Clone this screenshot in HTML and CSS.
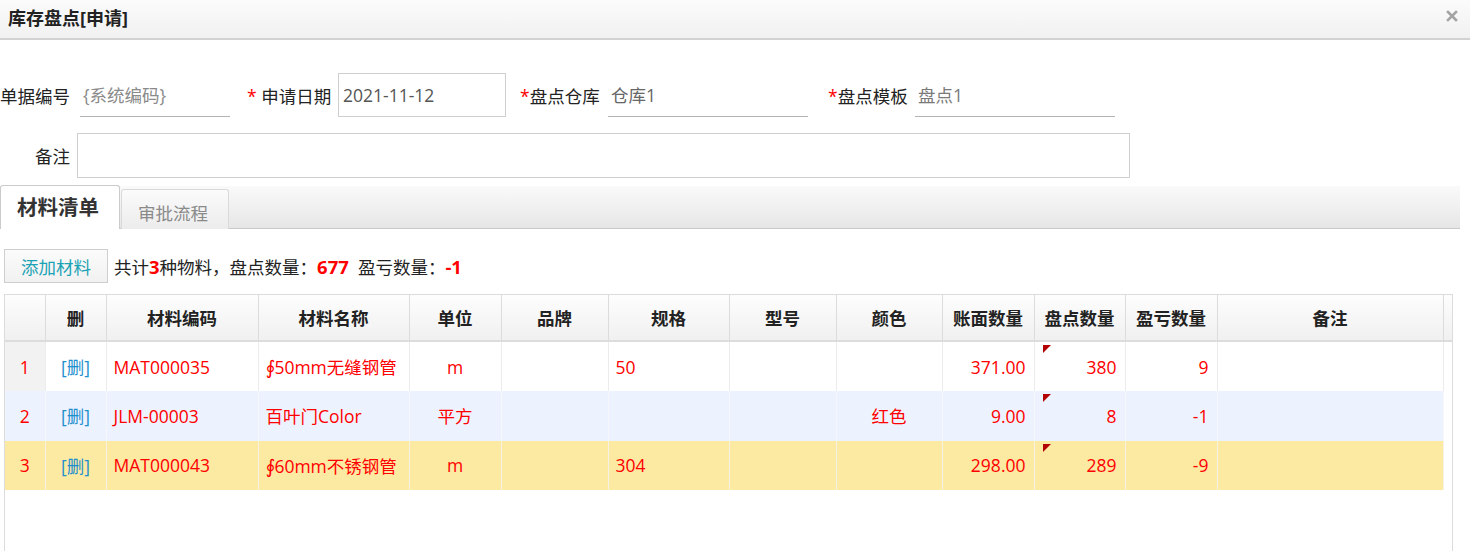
FILE: index.html
```html
<!DOCTYPE html>
<html lang="zh-CN">
<head>
<meta charset="utf-8">
<title>库存盘点[申请]</title>
<link rel="stylesheet" href="styles.css">
</head>
<body>
<div class="titlebar">
  <span class="title">库存盘点[申请]</span>
  <svg class="close" width="12" height="12" viewBox="0 0 12 12"><path d="M2 2L10 10M10 2L2 10" stroke="#a3a3a3" stroke-width="2.6" stroke-linecap="square"/></svg>
</div>

<div class="form">
  <div class="row">
    <span class="lbl w1">单据编号</span>
    <div class="line f1 ph">{系统编码}</div>
    <span class="lbl w2 g2"><span class="req">*</span> 申请日期</span>
    <div class="box f2 val">2021-11-12</div>
    <span class="lbl w3 g3"><span class="req">*</span>盘点仓库</span>
    <div class="line f3 val2">仓库1</div>
    <span class="lbl w4 g4"><span class="req">*</span>盘点模板</span>
    <div class="line f3 val3">盘点1</div>
  </div>
  <div class="row row2">
    <span class="lbl wr">备注</span>
    <div class="box area"></div>
  </div>
</div>

<div class="tabs">
  <div class="tab active">材料清单</div>
  <div class="tab">审批流程</div>
</div>

<div class="toolbar">
  <button class="btn">添加材料</button>
  <span class="summary">共计<b>3</b>种物料，盘点数量：<b>677</b>&nbsp;&nbsp;盈亏数量：<b>-1</b></span>
</div>

<div class="grid">
  <table class="head">
    <colgroup>
      <col style="width:40px"><col style="width:61px"><col style="width:152px"><col style="width:151px"><col style="width:92px"><col style="width:107px"><col style="width:121px"><col style="width:107px"><col style="width:106px"><col style="width:92px"><col style="width:91px"><col style="width:92px"><col style="width:226px"><col style="width:9px">
    </colgroup>
    <tr>
      <th></th><th>删</th><th>材料编码</th><th>材料名称</th><th>单位</th><th>品牌</th><th>规格</th><th>型号</th><th>颜色</th><th>账面数量</th><th>盘点数量</th><th>盈亏数量</th><th>备注</th><th class="sb"></th>
    </tr>
  </table>
  <table class="body">
    <colgroup>
      <col style="width:40px"><col style="width:61px"><col style="width:152px"><col style="width:151px"><col style="width:92px"><col style="width:107px"><col style="width:121px"><col style="width:107px"><col style="width:106px"><col style="width:92px"><col style="width:91px"><col style="width:92px"><col style="width:226px">
    </colgroup>
    <tr class="r1">
      <td class="num">1</td><td class="c del">[删]</td><td>MAT000035</td><td><span class="phi">∮</span>50mm无缝钢管</td><td class="c">m</td><td></td><td>50</td><td></td><td class="c"></td><td class="r">371.00</td><td class="r dirty"><i class="tri"></i>380</td><td class="r">9</td><td></td>
    </tr>
    <tr class="r2">
      <td class="num">2</td><td class="c del">[删]</td><td>JLM-00003</td><td>百叶门Color</td><td class="c">平方</td><td></td><td></td><td></td><td class="c">红色</td><td class="r">9.00</td><td class="r dirty"><i class="tri"></i>8</td><td class="r">-1</td><td></td>
    </tr>
    <tr class="r3">
      <td class="num">3</td><td class="c del">[删]</td><td>MAT000043</td><td><span class="phi">∮</span>60mm不锈钢管</td><td class="c">m</td><td></td><td>304</td><td></td><td class="c"></td><td class="r">298.00</td><td class="r dirty"><i class="tri"></i>289</td><td class="r">-9</td><td></td>
    </tr>
  </table>
</div>
</body>
</html>
```

FILE: styles.css
```css
html, body {
  margin: 0;
  padding: 0;
  overflow: hidden;
  height: 551px;
  background: #fff;
}
body {
  font-family: "Open Sans", "Noto Sans CJK SC", sans-serif;
  font-size: 17.5px;
  color: #222;
}

.titlebar {
  height: 38px;
  border-bottom: 2px solid #d2d2d2;
  background: linear-gradient(#fbfbfb, #f1f1f1);
  display: flex;
  align-items: center;
  justify-content: space-between;
  padding: 0 12px 0 8px;
}
.title {
  font-size: 18px;
  font-weight: bold;
  color: #222;
  margin-top: -4px;
}
.close { margin-top: -6px; }

.form { padding-top: 33px; }
.row {
  display: flex;
  align-items: center;
  height: 44px;
}
.row2 { margin-top: 16px; height: 45px; }
.lbl { white-space: nowrap; color: #222; flex: none; }
.req { color: #f00; }
.w1 { width: 80px; }
.w2 { width: 91px; }
.w3 { width: 88px; }
.w4 { width: 87px; }
.g2 { margin-left: 17px; }
.g3 { margin-left: 14px; }
.g4 { margin-left: 20px; }
.wr { width: 70px; text-align: right; padding-right: 7px; }

.line {
  box-sizing: border-box;
  height: 44px;
  border-bottom: 1px solid #b3b3b3;
  display: flex;
  align-items: center;
  padding-left: 3px;
  flex: none;
}
.f1 { width: 150px; }
.f2 { width: 168px; }
.f3 { width: 200px; }
.box {
  box-sizing: border-box;
  height: 44px;
  border: 1px solid #cfcfcf;
  display: flex;
  align-items: center;
  padding-left: 4px;
  flex: none;
}
.area { width: 1053px; height: 45px; }
.ph { color: #8a8a8a; }
.val { color: #555; }
.val2 { color: #666; }
.val3 { color: #7a7a7a; }

.tabs {
  margin-top: 8px;
  width: 1460px;
  height: 43px;
  box-sizing: border-box;
  background: linear-gradient(#fafafa, #e6e6e6);
  border-bottom: 1px solid #c9c9c9;
  display: flex;
  align-items: flex-end;
}
.tab {
  box-sizing: border-box;
  height: 40px;
  width: 108px;
  border: 1px solid #dadada;
  border-bottom: none;
  border-radius: 3px 3px 0 0;
  background: linear-gradient(#fbfbfb, #ececec);
  color: #8a8a8a;
  padding: 10px 0 0 16px;
  margin-bottom: -1px;
}
.tab.active {
  width: 120px;
  height: 44px;
  background: #fff;
  border-color: #cbcbcb;
  color: #333;
  font-weight: bold;
  font-size: 20.5px;
  padding: 5px 0 0 16px;
  margin-right: 1px;
}

.toolbar {
  margin-top: 20px;
  display: flex;
  align-items: center;
  height: 34px;
}
.btn {
  margin-left: 4px;
  width: 104px;
  height: 34px;
  border: 1px solid #cfcfcf;
  background: linear-gradient(#fbfbfb, #f1f1f1);
  color: #1aa3b4;
  font-family: inherit;
  font-size: 17.5px;
  padding: 0;
  border-radius: 0;
}
.summary {
  margin-left: 6px;
  color: #222;
}
.summary b { color: #f00; font-weight: bold; font-size: 18.5px; }

.grid {
  margin: 11px 0 0 4px;
  width: 1449px;
  height: 260px;
  box-sizing: border-box;
  border: 1px solid #dcdcdc;
  border-bottom: none;
}
table {
  border-collapse: collapse;
  table-layout: fixed;
}
.head { width: 1447px; }
.body { width: 1438px; }
th {
  height: 45px;
  padding: 0;
  border-right: 1px solid #dcdcdc;
  border-bottom: 2px solid #dcdcdc;
  background: linear-gradient(#fdfdfd, #f0f0f0);
  font-weight: bold;
  color: #222;
  text-align: center;
  white-space: nowrap;
}
th.sb { border-right: none; }
td {
  height: 49.3px;
  padding: 0 8px 0 7px;
  border-right: 1px solid #ececec;
  color: #f00;
  white-space: nowrap;
  overflow: hidden;
}
.phi { font-family: "DejaVu Sans", sans-serif; font-size: 19px; letter-spacing: -1px; }
td.c { text-align: center; padding: 0; }
td.r { text-align: right; }
td.num { text-align: center; padding: 0; }
td.del { color: #1e8fce; }
.r1 td { background: #fff; }
.r1 td.num { background: #f2f2f2; }
.r2 td { background: #edf3fe; }
.r3 td { background: #fce9a2; border-right-color: #f5f1e4; }
.r2 td { border-right-color: #f5f7fb; }
td.dirty { position: relative; }
.tri {
  position: absolute;
  top: 3px;
  left: 8px;
  width: 0;
  height: 0;
  border-top: 8px solid #b30000;
  border-right: 8px solid transparent;
}
```
